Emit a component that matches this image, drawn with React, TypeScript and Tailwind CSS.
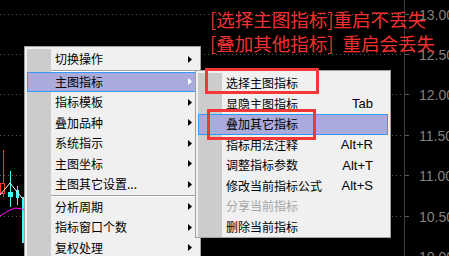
import React from 'react';

type Item =
  | { kind: 'sep' }
  | { kind: 'item'; label: string; arrow?: boolean; hl?: boolean; shortcut?: string; disabled?: boolean };

const mainItems: Item[] = [
  { kind: 'item', label: '切换操作', arrow: true },
  { kind: 'sep' },
  { kind: 'item', label: '主图指标', arrow: true, hl: true },
  { kind: 'item', label: '指标模板', arrow: true },
  { kind: 'item', label: '叠加品种', arrow: true },
  { kind: 'item', label: '系统指示', arrow: true },
  { kind: 'item', label: '主图坐标', arrow: true },
  { kind: 'item', label: '主图其它设置...', arrow: true },
  { kind: 'sep' },
  { kind: 'item', label: '分析周期', arrow: true },
  { kind: 'item', label: '指标窗口个数', arrow: true },
  { kind: 'item', label: '复权处理', arrow: true },
];

const subItems: Item[] = [
  { kind: 'item', label: '选择主图指标' },
  { kind: 'item', label: '显隐主图指标', shortcut: 'Tab' },
  { kind: 'item', label: '叠加其它指标', hl: true },
  { kind: 'item', label: '指标用法注释', shortcut: 'Alt+R' },
  { kind: 'item', label: '调整指标参数', shortcut: 'Alt+T' },
  { kind: 'item', label: '修改当前指标公式', shortcut: 'Alt+S' },
  { kind: 'item', label: '分享当前指标', disabled: true },
  { kind: 'item', label: '删除当前指标' },
];

function Arrow({ white }: { white?: boolean }) {
  return (
    <svg width="4" height="7" viewBox="0 0 4 7" className="shrink-0">
      <path d="M0 0 L4 3.5 L0 7 Z" fill={white ? '#ffffff' : '#000000'} />
    </svg>
  );
}

function MenuRows({ items }: { items: Item[] }) {
  return (
    <>
      {items.map((it, i) => {
        if (it.kind === 'sep') {
          return (
            <div key={i} className="flex h-[2px]">
              <div className="w-[24px] bg-[#cccccc]" />
              <div className="flex-1 border-t border-[#a0a0a0] border-b border-b-white" />
            </div>
          );
        }
        return (
          <div
            key={i}
            className={`flex h-[20.5px] items-center ${
              it.hl ? 'bg-[#aaaadd] shadow-[inset_0_0_0_1px_#3399ff]' : ''
            }`}
          >
            <div className={`w-[24px] self-stretch ${it.hl ? '' : 'bg-[#cccccc]'}`} />
            <div
              className={`pl-[4px] flex-1 whitespace-nowrap text-[12px] leading-none ${
                it.disabled ? 'text-[#a6a6a6]' : 'text-black'
              }`}
            >
              {it.label}
            </div>
            {it.shortcut && (
              <div className="pr-[15px] text-[13px] leading-none text-black font-['Liberation_Sans',sans-serif]">
                {it.shortcut}
              </div>
            )}
            {it.arrow && (
              <div className="pr-[6px] flex items-center">
                <Arrow white={it.hl} />
              </div>
            )}
          </div>
        );
      })}
    </>
  );
}

const levels = [
  { y: 14.5, t: '13.00' },
  { y: 54.5, t: '12.50' },
  { y: 94.5, t: '12.00' },
  { y: 135.5, t: '11.50' },
  { y: 175.5, t: '11.00' },
  { y: 216.5, t: '10.50' },
  { y: 256.5, t: '10.00' },
];

export default function App() {
  return (
    <div className="relative w-[449px] h-[256px] bg-black overflow-hidden font-['Noto_Sans_CJK_SC',sans-serif]">
      <svg className="absolute left-0 top-0" width="449" height="256" viewBox="0 0 449 256">
        {levels.map((l) => (
          <g key={l.t}>
            <line x1="0" y1={l.y} x2="404" y2={l.y} stroke="#5a5a5a" strokeDasharray="1 3" />
            <line x1="404" y1={l.y} x2="409" y2={l.y} stroke="#5a5a5a" />
            <text
              x="419"
              y={l.y + 5}
              fill="#808080"
              fontSize="14"
              fontFamily="'Liberation Sans', sans-serif"
            >
              {l.t}
            </text>
          </g>
        ))}
        <line x1="404.5" y1="0" x2="404.5" y2="256" stroke="#404040" />
        <line x1="3.5" y1="150" x2="3.5" y2="197" stroke="#ff3030" />
        <rect x="0.5" y="183.5" width="4" height="10" fill="black" stroke="#ff3030" />
        <line x1="10.5" y1="171" x2="10.5" y2="207" stroke="#40ffff" />
        <rect x="8" y="192" width="5" height="5" fill="#40ffff" />
        <line x1="17.5" y1="186" x2="17.5" y2="205" stroke="#40ffff" />
        <rect x="16" y="190" width="3" height="8" fill="#40ffff" />
        <rect x="22" y="197" width="2" height="46" fill="#40ffff" />
        <polyline points="0,195 10,183 22,198 24,200" fill="none" stroke="#ffffff" />
        <polyline points="0,216 8,211 15,208 22,209 24,210" fill="none" stroke="#ff00ff" />
      </svg>

      <div className="absolute left-[210px] top-[7px] text-[18.5px] leading-[24px] text-[#f23030] whitespace-nowrap">
        <div>[选择主图指标]重启不丢失</div>
        <div>
          [叠加其他指标]<span className="inline-block w-[9px]" />重启会丢失
        </div>
      </div>

      <div className="absolute left-[24px] top-[46px] w-[177px] border border-[#a0a0a0] bg-[#f0f0f0] p-[2px]">
        <MenuRows items={mainItems} />
      </div>

      <div className="absolute left-[195px] top-[70px] w-[196px] border border-[#a0a0a0] bg-[#f0f0f0] pt-[2px] px-[2px] pb-0">
        <MenuRows items={subItems} />
      </div>

      <div className="absolute left-[205px] top-[68px] w-[114px] h-[26px] border-[3px] border-[#f43838]" />
      <div className="absolute left-[207px] top-[109px] w-[109px] h-[31px] border-[3px] border-[#f43838]" />
    </div>
  );
}
